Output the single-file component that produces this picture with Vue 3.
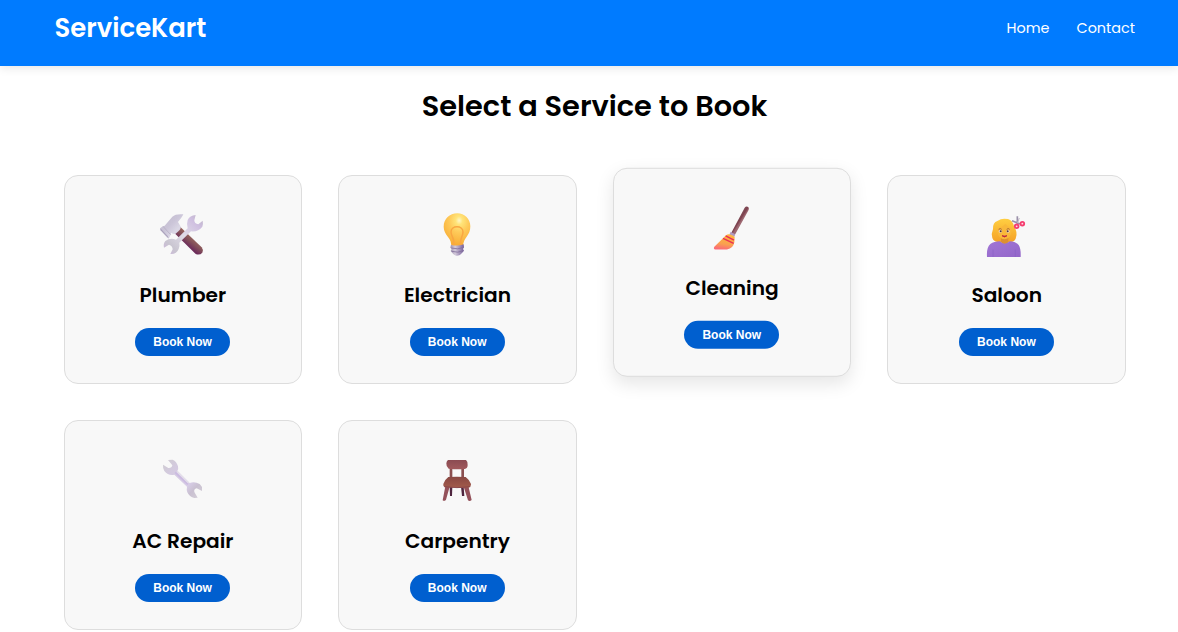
<script setup>
const services = [
  { name: 'Plumber', icon: 'tools', box: '0 0 192 180' },
  { name: 'Electrician', icon: 'bulb', box: '0 0 192 180' },
  { name: 'Cleaning', icon: 'broom', box: '-1 1 192 180', raised: true },
  { name: 'Saloon', icon: 'haircut', box: '0 -6 192 180' },
  { name: 'AC Repair', icon: 'wrench', box: '0 -3 192 180' },
  { name: 'Carpentry', icon: 'chair', box: '0 -3 192 180' },
]
</script>

<template>
  <div class="page">
    <header class="topbar">
      <div class="logo">ServiceKart</div>
      <nav class="nav">
        <a>Home</a>
        <a>Contact</a>
      </nav>
    </header>
    <main>
      <h1>Select a Service to Book</h1>
      <section class="grid">
        <article v-for="s in services" :key="s.name" class="card" :class="{ raised: s.raised }">
          <svg class="icon" :viewBox="s.box" aria-hidden="true">
            <g v-if="s.icon === 'tools'">
              <defs>
                <linearGradient id="t-steel" x1="0" y1="0" x2="1" y2="1">
                  <stop offset="0" stop-color="#c0b9cc" /><stop offset=".45" stop-color="#cbc5d8" /><stop offset=".7" stop-color="#dcd8e6" /><stop offset="1" stop-color="#b9aaca" />
                </linearGradient>
                <linearGradient id="t-spanner" x1="1" y1="0" x2="0" y2="1">
                  <stop offset="0" stop-color="#bcb5c4" /><stop offset=".2" stop-color="#cfbfe0" /><stop offset=".5" stop-color="#e0dce8" /><stop offset=".8" stop-color="#c9c5d0" /><stop offset="1" stop-color="#cdb5de" />
                </linearGradient>
                <linearGradient id="t-wood" gradientUnits="userSpaceOnUse" x1="132" y1="100" x2="112" y2="125">
                  <stop offset="0" stop-color="#9a6a5f" /><stop offset=".5" stop-color="#84515a" /><stop offset="1" stop-color="#6d2d5b" />
                </linearGradient>
              </defs>
              <path d="M88 66L155 130Q161 137 157 146Q149 155 137 150L74 88Z" fill="url(#t-wood)" />
              <path d="M31 72L39 67L44 65L67 38Q77 29 100 31Q99 36 84 54L91 66Q95 73 87 80L77 89Q70 92 64 86L62 92L57 103L52 102L32 79Q29 75 31 72Z" fill="url(#t-steel)" />
              <path d="M39 67L62 92" fill="none" stroke="#b1a9c0" stroke-width="2" />
              <path d="M31 73L53 96L57 104L32 79Z" fill="#aaa2bb" />
              <path d="M137 33Q119 34 113 48Q109 61 113 73L78 107Q61 100 46 111Q39 119 42 131L57 122Q68 126 68 136L61 150Q79 152 86 135Q90 127 88 116L123 82Q145 84 157 68Q160 59 158 50L145 61Q133 59 133 49Z" fill="url(#t-spanner)" />
            </g>
            <g v-else-if="s.icon === 'bulb'">
              <defs>
                <radialGradient id="b-glass" cx=".58" cy=".22" r=".75">
                  <stop offset="0" stop-color="#fff7c8" /><stop offset=".17" stop-color="#ffe479" /><stop offset=".5" stop-color="#fec958" /><stop offset="1" stop-color="#f8ad36" />
                </radialGradient>
                <linearGradient id="b-base">
                  <stop offset="0" stop-color="#9f92af" /><stop offset=".35" stop-color="#d3cadb" /><stop offset="1" stop-color="#765e9a" />
                </linearGradient>
              </defs>
              <path d="M97 28C74 28 56 45 56 68C56 80 62 90 69 99C77 108 78 116 79 126H114C115 114 119 105 125 98C132 89 136 80 136 67C136 45 119 28 97 28Z" fill="url(#b-glass)" />
              <path d="M86 124V112C86 101 78 95 78 84C78 63 114 63 114 84C114 95 107 101 107 112V124" fill="none" stroke="#f9a642" stroke-width="4.5" />
              <path d="M78 122Q96 128 116 121L117 130L114 135L117 140L111 147Q104 157 93 155Q87 153 82 147L77 141L80 135L76 131Z" fill="url(#b-base)" />
              <path d="M79 132Q99 138 116 130M80 142Q99 148 115 140" fill="none" stroke="#82709c" stroke-width="2.5" />
            </g>
            <g v-else-if="s.icon === 'broom'">
              <defs>
                <linearGradient id="br-straw" x1=".7" y1="0" x2=".5" y2="1">
                  <stop offset="0" stop-color="#ffb63d" /><stop offset=".65" stop-color="#f9a14f" /><stop offset="1" stop-color="#fb6c76" />
                </linearGradient>
                <linearGradient id="br-handle" gradientUnits="userSpaceOnUse" x1="112" y1="67" x2="123" y2="74">
                  <stop offset="0" stop-color="#80505a" /><stop offset=".55" stop-color="#7d414e" /><stop offset="1" stop-color="#9e6972" />
                </linearGradient>
              </defs>
              <path d="M93 109L133 34Q138 27 145 33Q147 37 144 42L103 116Z" fill="url(#br-handle)" />
              <path d="M91 106L104 113L103 121L87 115Z" fill="#b29bc1" />
              <path d="M83 113Q77 114 71 122L42 151Q38 158 45 159H80Q99 155 102 137L103 122Q97 114 83 113Z" fill="url(#br-straw)" />
              <path d="M76 118L101 131M68 126L100 141" fill="none" stroke="#e92d57" stroke-width="4" />
            </g>
            <g v-else-if="s.icon === 'haircut'">
              <defs>
                <linearGradient id="h-hair" x2="0" y2="1">
                  <stop offset="0" stop-color="#ffcf42" /><stop offset="1" stop-color="#f5a126" />
                </linearGradient>
                <linearGradient id="h-shirt" x2="1" y2="1">
                  <stop offset="0" stop-color="#a176d5" /><stop offset="1" stop-color="#9366c9" />
                </linearGradient>
              </defs>
              <path d="M91 38Q80 38 70 45Q56 49 57 69Q51 83 55 96Q60 109 78 109H107Q125 108 126 94Q131 78 120 61Q116 43 102 39Z" fill="url(#h-hair)" />
              <path d="M81 94H103V108L98 116H86L81 108Z" fill="#dd9030" />
              <path d="M70 68Q83 66 94 54Q104 64 113 66V76Q111 98 92 100Q74 99 70 79Z" fill="#f9b83a" />
              <path d="M78 106Q91 120 107 106Q124 106 134 117Q141 127 140 153H39Q37 124 49 114Q60 106 78 106Z" fill="url(#h-shirt)" />
              <path d="M57 131V153M124 131V153" stroke="#8a60c4" stroke-width="2" />
              <path d="M74 70Q79 66 83 70M98 70Q103 66 107 70" fill="none" stroke="#965630" stroke-width="2.5" />
              <circle cx="79" cy="76" r="4.5" fill="#f2dcc4" /><circle cx="102" cy="76" r="4.5" fill="#f2dcc4" />
              <circle cx="80" cy="76" r="3" fill="#543640" /><circle cx="101" cy="76" r="3" fill="#543640" />
              <path d="M84 89Q92 91 99 89Q91 97 84 89Z" fill="#c72346" stroke="#bb2840" stroke-width="2.5" />
              <path d="M114 44L138 54M130 31L130 54" stroke="#9b91aa" stroke-width="5" />
              <path d="M130 51L136 36" stroke="#bcb3c4" stroke-width="3" />
              <circle cx="128" cy="61" r="5.5" fill="#f8dce6" stroke="#f53e70" stroke-width="5.5" />
              <circle cx="145" cy="53" r="5.5" fill="#f8dce6" stroke="#f53e70" stroke-width="5.5" />
            </g>
            <g v-else-if="s.icon === 'wrench'">
              <defs>
                <linearGradient id="w-steel" gradientUnits="userSpaceOnUse" x1="40" y1="35" x2="151" y2="143">
                  <stop offset="0" stop-color="#cfccd1" /><stop offset=".25" stop-color="#d4cae0" /><stop offset=".65" stop-color="#d8cde7" /><stop offset=".8" stop-color="#c9c0d1" /><stop offset="1" stop-color="#d5d0d8" />
                </linearGradient>
              </defs>
              <path d="M54 30L68 29Q80 34 84 49Q86 57 82 63L119 99Q134 94 149 102L156 111V123L140 115Q131 117 133 126L143 143L133 144Q118 141 112 127Q109 119 111 110L73 74Q55 78 43 63Q38 54 39 44L55 54Q65 55 67 46Z" fill="url(#w-steel)" />
              <path d="M76 67L114 103" stroke="#cbbae1" stroke-width="6" />
              <path d="M81 64L116 99" stroke="#e3dee9" stroke-width="5" />
            </g>
            <g v-else>
              <defs>
                <linearGradient id="c-back" x2="0" y2="1">
                  <stop offset="0" stop-color="#8b4b52" /><stop offset="1" stop-color="#a15a5d" />
                </linearGradient>
                <linearGradient id="c-seat" x2="0" y2="1">
                  <stop offset="0" stop-color="#884742" /><stop offset="1" stop-color="#a35b4b" />
                </linearGradient>
              </defs>
              <path d="M78 53V84M113 53V84" stroke="#8b4f50" stroke-width="8" />
              <path d="M74 110H82L81 138H75ZM108 110H116L118 138H111Z" fill="#4f263f" />
              <path d="M61 109L74 110L63 149Q58 155 53 151ZM116 110L130 108L140 150Q134 156 129 151Z" fill="#94515a" />
              <path d="M69 30H123Q129 35 128 45Q128 55 119 57Q96 59 71 56Q63 50 64 40Q65 33 69 30Z" fill="url(#c-back)" />
              <path d="M70 81Q95 79 122 81Q132 88 138 102Q138 111 130 113Q96 115 60 112Q53 109 55 102Q59 89 70 81Z" fill="url(#c-seat)" />
              <path d="M57 110Q95 116 136 110" fill="none" stroke="#7b3c49" stroke-width="2" />
            </g>
          </svg>
          <h2>{{ s.name }}</h2>
          <button>Book Now</button>
        </article>
      </section>
    </main>
  </div>
</template>

<style>
body { margin: 0; background: #fff; overflow: hidden; }
</style>

<style scoped>
.page {
  height: 632px;
  overflow: hidden;
  background: #fff;
  color: #000;
  font-family: Poppins, Inter, "Open Sans", sans-serif;
}
.topbar {
  box-sizing: border-box;
  height: 66px;
  padding: 8px 43px 0 54.6px;
  display: flex;
  justify-content: space-between;
  background: #007bff;
  color: #fff;
  box-shadow: 0 2px 9px rgba(0, 0, 0, .1);
}
.logo { font-size: 25.92px; line-height: 40px; font-weight: 600; }
.nav { display: flex; gap: 27px; font-size: 14.4px; line-height: 40px; font-weight: 400; }
h1 {
  margin: 18px 0 0 11px;
  text-align: center;
  font-size: 28.8px;
  line-height: 44px;
  font-weight: 600;
}
.grid {
  display: grid;
  grid-template-columns: repeat(4, 1fr);
  gap: 36px;
  padding: 47.1px 52px 0 63.6px;
}
.card {
  box-sizing: border-box;
  height: 209.3px;
  padding-top: 28px;
  display: flex;
  flex-direction: column;
  align-items: center;
  background: #f8f8f8;
  border: 1px solid #ddd;
  border-radius: 14px;
}
.raised {
  transform: translateY(-7.2px);
  box-shadow: 0 7px 18px rgba(0, 0, 0, .1);
}
.icon { width: 64px; height: 60px; margin-right: 1px; flex: none; }
h2 { margin: 16.2px 0 0; font-size: 20.16px; line-height: 30px; font-weight: 600; white-space: nowrap; }
button {
  width: 95px;
  height: 28px;
  margin: 18px .6px 0 0;
  padding: 0;
  border: 0;
  border-radius: 18px;
  background: #005fcf;
  color: #fff;
  font: bold 12px/28px "Liberation Sans", Arial, sans-serif;
}
</style>
